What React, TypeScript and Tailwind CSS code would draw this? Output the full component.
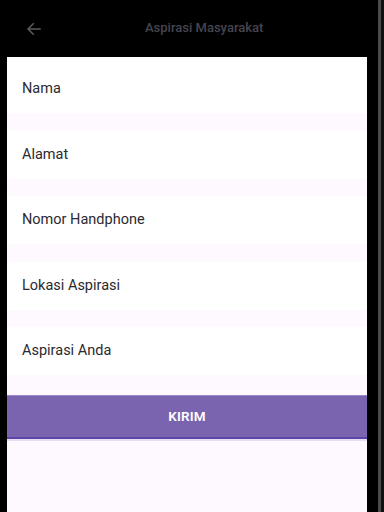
import React from "react";

const fields = ["Nama", "Alamat", "Nomor Handphone", "Lokasi Aspirasi", "Aspirasi Anda"];

export default function App() {
  return (
    <div className="w-[384px] h-[512px] bg-black flex overflow-hidden" style={{ fontFamily: "Roboto, 'Noto Sans', sans-serif" }}>
      <div className="w-[7px] shrink-0" />
      <div className="w-[360px] flex flex-col shrink-0">
        <div className="h-[57px] shrink-0 flex items-center relative">
          <svg className="absolute left-[18px] top-[20px]" width="18" height="18" viewBox="0 0 24 24" fill="none" stroke="#5a5a60" strokeWidth="2" strokeLinecap="square">
            <path d="M20 12H5" />
            <path d="M11 5l-7 7 7 7" />
          </svg>
          <div className="absolute left-[138px] top-[19px] text-[13px] font-medium text-[#46454f] leading-[18px]">Aspirasi Masyarakat</div>
        </div>
        <div className="flex-1 bg-[#fdf9fe] flex flex-col">
          <div className="h-[8px] bg-white" />
          <div className="flex flex-col gap-[17.5px]">
            {fields.map((f) => (
              <div key={f} className="h-[48px] bg-white flex items-center pl-[15px] text-[14.5px] text-[#2b2930]">
                {f}
              </div>
            ))}
          </div>
          <div className="h-[20px]" />
          <div className="h-[44px] bg-[#7b64af] border-t border-t-[#9a86c8] border-b-2 border-b-[#5c45a6] flex items-center justify-center text-white text-[13.5px] font-semibold tracking-[0.2px]">
            KIRIM
          </div>
          <div className="h-[2px] bg-[#e6dcf5]" />
        </div>
      </div>
      <div className="w-[11px] shrink-0" />
      <div className="w-[3px] shrink-0 bg-[#4a4a4c]" />
      <div className="w-[3px] shrink-0 bg-[#101010]" />
    </div>
  );
}
